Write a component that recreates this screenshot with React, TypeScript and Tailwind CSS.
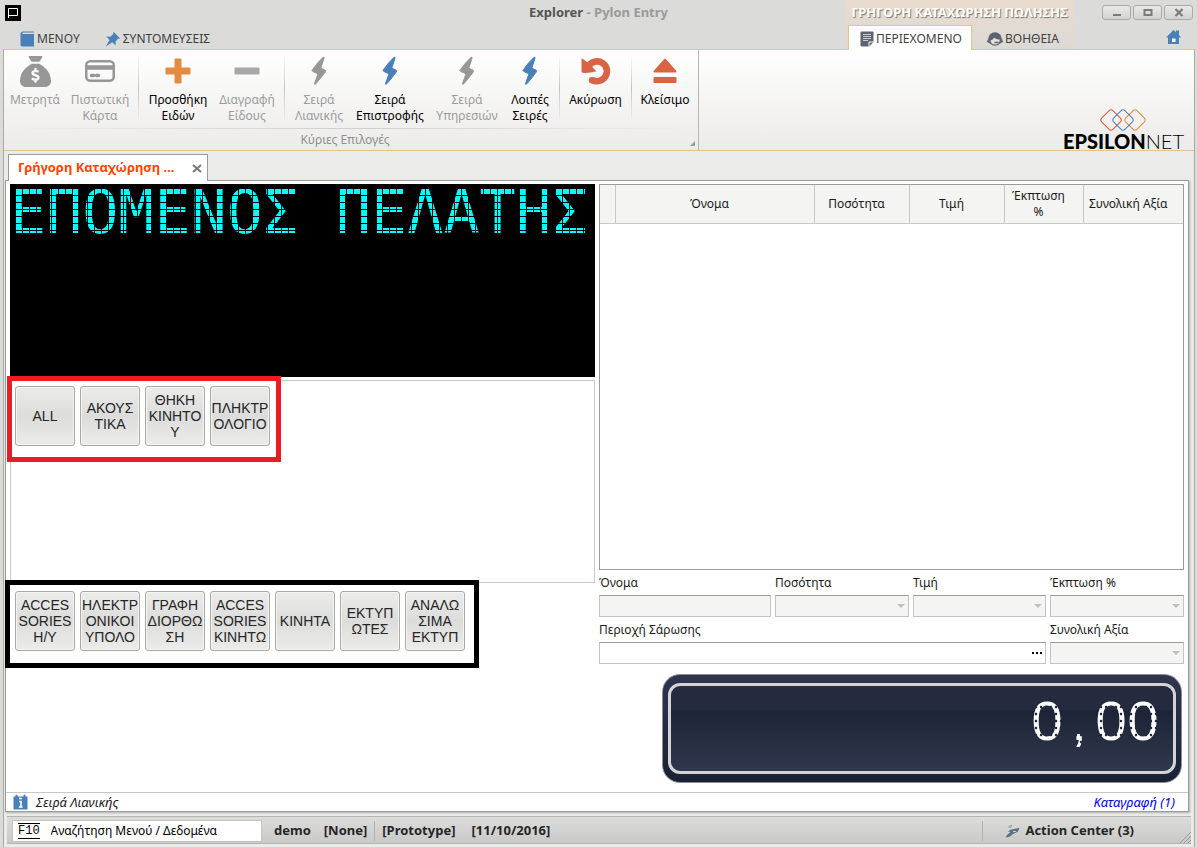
import { useState } from 'react'
import type { ReactNode } from 'react'
import { FaSackDollar } from 'react-icons/fa6'
import { clsx } from 'clsx'

// ── Icons ─────────────────────────────────────────────────────────────────────

function BoltIcon() {
  return (
    <svg width="16" height="30" viewBox="0 0 16 30" fill="currentColor" stroke="currentColor" strokeLinejoin="round">
      <path d="M12 1.300Q13.500.8 13 2.200L9.800 12.200l4.300 2q1 .6.300 1.600Q10 22 4.800 27.800 3.200 29 3.500 27.600L7 17.800 1.700 15.400Q.6 14.800 1.400 13.700 6 7 12 1.300z" />
    </svg>
  )
}

function CardIcon() {
  return (
    <svg width="30" height="24" viewBox="0 0 30 24" fill="none" stroke="currentColor">
      <rect x="1.250" y="2.250" width="27.500" height="19.500" rx="4" strokeWidth="2.500" />
      <path d="M1 8.500h28" strokeWidth="4.500" />
      <path d="M6.500 16.500h2M11.500 16.500h2" strokeWidth="3.500" strokeLinecap="round" />
    </svg>
  )
}

function PlusIcon() {
  return (
    <svg width="26" height="26" viewBox="0 0 26 26" fill="currentColor">
      <rect x="9.500" y="0.500" width="7" height="25" rx="1" />
      <rect x="0.500" y="9.500" width="25" height="7" rx="1" />
    </svg>
  )
}

function MinusIcon() {
  return (
    <svg width="26" height="26" viewBox="0 0 26 26" fill="currentColor">
      <rect x="0.500" y="9.500" width="25" height="7" rx="1" />
    </svg>
  )
}

function UndoIcon() {
  return (
    <svg width="30" height="28" viewBox="0 0 30 28">
      <path d="M8 8.500A9.900 9.900 0 1 1 11 22.800" fill="none" stroke="currentColor" strokeWidth="6.600" />
      <circle cx="11" cy="23.200" r="3.200" fill="currentColor" />
      <path d="M.5 2.200Q.5 1 1.600 1.700L6 5 15.500 14.200Q8 16.400 1.600 15.800.5 15.700.5 14.600z" fill="currentColor" />
    </svg>
  )
}

function EjectIcon() {
  return (
    <svg width="24" height="26" viewBox="0 0 24 26" fill="currentColor">
      <path d="M11 1.200c.6-.6 1.400-.6 2 0l10 11.300c.8.900.5 2-.7 2H1.700c-1.200 0-1.500-1.100-.7-2z" />
      <rect x="0.500" y="19" width="23" height="6" rx="1" />
    </svg>
  )
}

function BookIcon() {
  return (
    <svg width="15" height="16" viewBox="0 0 15 16" fill="#4a80b9">
      <path d="M3 .5h11v1H3.500C2 1.500 1.800 2.500 2.800 3H14v12.500H2.500C1.200 15.500.5 14.600.5 13.500V3C.5 1.500 1.500.5 3 .5z" />
    </svg>
  )
}

function PinIcon() {
  return (
    <svg width="16" height="16" viewBox="0 0 16 16" fill="#4a80b9">
      <path d="M8.500.8 15.200 7.500l-2.400.2-2.300 3 .2 3.800L7.200 11.200.8 15.400 4.600 9 1.300 5.600l4 .2L8.300 3z" />
    </svg>
  )
}

function NoteIcon() {
  return (
    <svg width="14" height="16" viewBox="0 0 14 16">
      <path d="M1.500.5h11q1 0 1 1V11l-4.200 4.500H1.500q-1 0-1-1v-13q0-1 1-1z" fill="#5d6470" />
      <path d="M3 3.500h8M3 5.500h8M3 7.500h8M3 9.500h5" stroke="#e8e8ea" strokeWidth=".8" />
      <path d="M9 15.500V11h4.500" fill="none" stroke="#fff" />
    </svg>
  )
}

function HelpIcon() {
  return (
    <svg width="16" height="16" viewBox="0 0 16 16">
      <circle cx="8" cy="8" r="6.800" fill="#5d6470" />
      <path d="M3.500 9.500C5 9 6.500 8 7.200 6.500 8.500 8 10.500 8.600 12.800 8.600c0 3-2 5-4.600 5s-4.500-1.700-4.700-4.100z" fill="#e6dfd6" />
      <path d="M7.500 11.500h4" fill="none" stroke="#5d6470" strokeWidth="1.500" />
      <path d="M1 7.500 0 11l3 1.500zM15 7.500l1 3.500-3 1.500z" fill="#5d6470" />
    </svg>
  )
}

function HomeIcon() {
  return (
    <svg width="15" height="14" viewBox="0 0 15 14" fill="#4a80b9">
      <path d="M7.500 0 10 2.300V.5h3v4.600l2 2.400h-2V14H2V7.500H0z" />
      <path d="M6 8.500h3.500V12H6z" fill="#fff" />
    </svg>
  )
}

function InfoIcon() {
  return (
    <svg width="15" height="16" viewBox="0 0 15 16">
      <path d="M.5 2.500h2V.8h2v1.700h6V.8h2v1.700h2v13H.5z" fill="#4a80b9" />
      <path d="M6 4.500h3M6 7.500h2V13M5.800 13h3.800" stroke="#fff" strokeWidth="1.600" fill="none" />
    </svg>
  )
}

function RocketIcon() {
  return (
    <svg width="16" height="14" viewBox="0 0 16 14">
      <path d="M1 12 5.500 8 3 7.500l3-2L14.500 4 13 7.500 8 10 5 12.500 1.500 13.500z" fill="#5c7088" />
      <path d="M2.500 3.500 5 1h2.500L6 4z" fill="#a3acb5" />
      <path d="M8 7.500h3" stroke="#c9ced3" />
    </svg>
  )
}

function DiamondsLogo() {
  const marks = [
    { x: 12, color: '#d9583c' },
    { x: 36, color: '#e58a3e' },
    { x: 24, color: '#4a80b9' },
  ]
  return (
    <svg width="49" height="24" viewBox="0 0 49 24" fill="none">
      {marks.map(m => (
        <rect
          key={m.x}
          x={m.x - 8}
          y="4"
          width="16"
          height="16"
          rx="3"
          stroke={m.color}
          transform={`rotate(45 ${m.x} 12)`}
        />
      ))}
    </svg>
  )
}

// ── Window header ─────────────────────────────────────────────────────────────

function WindowButton({ label, children }: { label: string; children: ReactNode }) {
  return (
    <button
      type="button"
      aria-label={label}
      className="flex h-[15px] w-[29px] items-center justify-center rounded-[3px] border border-[#a9a9a8] bg-gradient-to-b from-[#e9e9e8] to-[#d2d2d0]"
    >
      <svg width="10" height="9" viewBox="0 0 10 9" fill="none" stroke="#7b7b7b">
        {children}
      </svg>
    </button>
  )
}

function WindowHeader() {
  return (
    <header className="flex h-[49px] text-[#3f3f3f]">
      <div className="flex flex-1 flex-col">
        <div className="flex h-[26px] items-center pl-[5px]">
          <span className="flex size-4 items-center justify-center bg-black">
            <svg width="12" height="12" viewBox="0 0 12 12" fill="none" stroke="#fff">
              <path d="M1.500 11V1.500h9v7h-9" />
            </svg>
          </span>
          <h1 className="mr-[177px] ml-auto text-[13px] font-bold text-[#9a9a9a]">
            <span className="text-[#555]">Explorer</span> - Pylon Entry
          </h1>
        </div>
        <nav className="flex h-[23px] items-center gap-[25px] pt-[2px] pl-5 text-xs">
          <button type="button" className="flex items-center gap-[2px]">
            <BookIcon />ΜΕΝΟΥ
          </button>
          <button type="button" className="flex items-center gap-[2px]">
            <PinIcon />ΣΥΝΤΟΜΕΥΣΕΙΣ
          </button>
        </nav>
      </div>

      <div className="flex w-[229px] flex-col border-x border-[#e6d9c8] bg-gradient-to-b from-[#e9dccd] to-[#dcd9d5]">
        <div className="flex h-[25px] items-center justify-center text-[13px] font-bold whitespace-nowrap text-white [text-shadow:1px_1px_1px_#777]">
          ΓΡΗΓΟΡΗ ΚΑΤΑΧΩΡΗΣΗ ΠΩΛΗΣΗΣ
        </div>
        <div className="flex flex-1 text-xs" role="tablist">
          <button
            type="button"
            role="tab"
            aria-selected="true"
            className="relative z-10 -mb-px ml-[2px] flex w-[124px] items-center gap-[2px] border border-b-0 border-[#e3c48f] bg-white pt-px pl-[11px]"
          >
            <NoteIcon />ΠΕΡΙΕΧΟΜΕΝΟ
          </button>
          <button type="button" role="tab" aria-selected="false" className="ml-[15px] flex items-center gap-[2px] pt-[3px]">
            <HelpIcon />ΒΟΗΘΕΙΑ
          </button>
        </div>
      </div>

      <div className="flex w-[123px] flex-col items-end">
        <div className="flex h-6 items-center gap-[2px] pr-1">
          <WindowButton label="Minimize"><path d="M1 7h8" strokeWidth="2" /></WindowButton>
          <WindowButton label="Maximize"><path d="M1.500 2h7v5h-7z" strokeWidth="2" /></WindowButton>
          <WindowButton label="Close"><path d="m1.500 1 7 7m0-7-7 7" strokeWidth="2.200" /></WindowButton>
        </div>
        <button type="button" aria-label="Home" className="mt-[6px] mr-4">
          <HomeIcon />
        </button>
      </div>
    </header>
  )
}

// ── Ribbon ────────────────────────────────────────────────────────────────────

interface RibbonItem {
  label: string
  icon: ReactNode
  width: string
  color: string
  disabled?: boolean
}

const RIBBON_GROUPS: { id: string; pad: string; items: RibbonItem[] }[] = [
  {
    id: 'payment',
    pad: 'pr-1',
    items: [
      { label: 'Μετρητά', icon: <FaSackDollar size={31} />, width: 'w-[62px]', color: 'text-[#979797]', disabled: true },
      { label: 'Πιστωτική Κάρτα', icon: <CardIcon />, width: 'w-[68px]', color: 'text-[#979797]', disabled: true },
    ],
  },
  {
    id: 'lines',
    pad: 'pr-[7px]',
    items: [
      { label: 'Προσθήκη Ειδών', icon: <PlusIcon />, width: 'w-[78px]', color: 'text-[#e58a43]' },
      { label: 'Διαγραφή Είδους', icon: <MinusIcon />, width: 'w-[60px]', color: 'text-[#a8a8a8]', disabled: true },
    ],
  },
  {
    id: 'series',
    pad: 'pr-[6px]',
    items: [
      { label: 'Σειρά Λιανικής', icon: <BoltIcon />, width: 'w-[68px]', color: 'text-[#979797]', disabled: true },
      { label: 'Σειρά Επιστροφής', icon: <BoltIcon />, width: 'w-[74px]', color: 'text-[#4a80b9]' },
      { label: 'Σειρά Υπηρεσιών', icon: <BoltIcon />, width: 'w-[80px]', color: 'text-[#979797]', disabled: true },
      { label: 'Λοιπές Σειρές', icon: <BoltIcon />, width: 'w-[46px]', color: 'text-[#4a80b9]' },
    ],
  },
  {
    id: 'cancel',
    pad: 'pr-0',
    items: [{ label: 'Ακύρωση', icon: <UndoIcon />, width: 'w-[71px]', color: 'text-[#d96445]' }],
  },
  {
    id: 'close',
    pad: 'pr-0',
    items: [{ label: 'Κλείσιμο', icon: <EjectIcon />, width: 'w-[66px]', color: 'text-[#d96445]' }],
  },
]

function Ribbon() {
  return (
    <section className="flex border-y border-[#e3c48f] bg-gradient-to-b from-white to-[#ecebe9]">
      <div className="relative border-r border-[#b5b5b4]">
        <div className="flex">
          {RIBBON_GROUPS.map((g, i) => (
            <div key={g.id} className={clsx('flex', g.pad)}>
              {i > 0 && <span className="mt-1 h-[70px] w-px bg-gradient-to-b from-transparent via-[#c4c4c4] to-transparent" />}
              {g.items.map(item => (
                <button
                  key={item.label}
                  type="button"
                  disabled={item.disabled}
                  className={clsx('flex h-[78px] flex-col items-center pt-[5px] text-xs leading-4', item.width)}
                >
                  <span className={clsx('flex h-8 items-center', item.color)}>{item.icon}</span>
                  <span className={clsx('mt-[5px]', item.disabled ? 'text-[#9b9b9b]' : 'text-black')}>{item.label}</span>
                </button>
              ))}
            </div>
          ))}
        </div>
        <div className="mx-1 h-px bg-gradient-to-r from-transparent via-[#cfcfce] to-transparent" />
        <div className="flex h-[21px] items-center justify-center pr-3 text-xs text-[#8e8e8e]">Κύριες Επιλογές</div>
        <svg width="5" height="5" className="absolute right-[3px] bottom-1" fill="#9b9b9b">
          <path d="M5 0v5H0z" />
        </svg>
      </div>
      <div className="flex flex-1 flex-col items-end justify-end pr-[10px]">
        <div className="mr-9">
          <DiamondsLogo />
        </div>
        <div className="font-[Lato,sans-serif] text-[20px] leading-[18px] font-black text-black">
          EPSILON<span className="font-light">NET</span>
        </div>
      </div>
    </section>
  )
}

// ── Till ──────────────────────────────────────────────────────────────────────

const SUBCATEGORIES = ['ALL', 'ΑΚΟΥΣ\nΤΙΚΑ', 'ΘΗΚΗ\nΚΙΝΗΤΟ\nΥ', 'ΠΛΗΚΤΡ\nΟΛΟΓΙΟ']

const CATEGORIES = [
  'ACCES\nSORIES\nΗ/Υ',
  'ΗΛΕΚΤΡ\nΟΝΙΚΟΙ\nΥΠΟΛΟ',
  'ΓΡΑΦΗ\nΔΙΟΡΘΩ\nΣΗ',
  'ACCES\nSORIES\nΚΙΝΗΤΩ',
  'ΚΙΝΗΤΑ',
  'ΕΚΤΥΠ\nΩΤΕΣ',
  'ΑΝΑΛΩ\nΣΙΜΑ\nΕΚΤΥΠ',
]

function TileRow({ items }: { items: string[] }) {
  return (
    <div className="flex gap-[5px]">
      {items.map(name => (
        <button
          key={name}
          type="button"
          className="flex size-[60px] items-center justify-center rounded-[3px] border border-[#a9a9a8] bg-gradient-to-b from-[#ececeb] via-[#dcdcdb] to-[#ececeb] font-['Liberation_Sans',Arial,sans-serif] text-[14px] leading-4 whitespace-pre text-[#262626] shadow-[inset_0_0_0_1px_#f4f4f3]"
        >
          {name}
        </button>
      ))}
    </div>
  )
}

// Each character takes a 36px wide block of five 7px cells.
function CustomerDisplay() {
  return (
    <div className="relative h-[193px] bg-black font-['DejaVu_Sans_Mono',monospace] text-[60px] leading-[56px] whitespace-nowrap text-[#00ffff]">
      ΕΠΟΜΕΝΟΣ ΠΕΛΑΤΗΣ
      <div className="absolute inset-0 bg-[linear-gradient(90deg,transparent_6px,black_6px_7px,transparent_7px_13px,black_13px_14px,transparent_14px_20px,black_20px_21px,transparent_21px_27px,black_27px_28px,transparent_28px_35px,black_35px_36px)] bg-[length:36px_100%] bg-[position:6px_0]" />
      <div className="absolute inset-0 bg-[linear-gradient(transparent_6px,black_6px)] bg-[length:100%_7px] bg-[position:0_5px]" />
    </div>
  )
}

const COLUMNS = [
  { label: 'Όνομα', width: 'w-auto' },
  { label: 'Ποσότητα', width: 'w-[95px]' },
  { label: 'Τιμή', width: 'w-[95px]' },
  { label: 'Έκπτωση %', width: 'w-[79px]' },
  { label: 'Συνολική Αξία', width: 'w-[100px]' },
]

function LinesTable() {
  return (
    <div className="min-h-[386px] flex-1 border border-[#9b9b9b] bg-white">
      <table className="w-full table-fixed text-xs leading-4">
        <thead>
          <tr className="h-[38px] border-b border-[#c8c8c8] bg-[#f4f4f3]">
            <th className="w-[15px] border-r border-[#c8c8c8]" aria-label="Γραμμή" />
            {COLUMNS.map(c => (
              <th key={c.label} className={clsx('border-r border-[#c8c8c8] py-0 pr-[14px] pl-1 font-normal last:border-r-0', c.width)}>
                {c.label}
              </th>
            ))}
          </tr>
        </thead>
        <tbody />
      </table>
    </div>
  )
}

const fieldBorder = 'h-[22px] w-full border border-[#c4c4c4] border-t-[#9b9b9b]'

function ComboField({ id, label }: { id: string; label: string }) {
  return (
    <div>
      <label htmlFor={id} className="block h-[25px] leading-[25px]">{label}</label>
      <div className="relative">
        <select id={id} disabled className={clsx(fieldBorder, 'block appearance-none bg-[#f4f4f3]')} />
        <svg width="8" height="4" className="absolute top-[9px] right-1" fill="#c0c0c0">
          <path d="M0 0h8L4 4z" />
        </svg>
      </div>
    </div>
  )
}

function EntryForm() {
  const [scan, setScan] = useState('')
  return (
    <form className="grid grid-cols-[172fr_134fr_133fr_134fr] gap-x-1 text-xs" onSubmit={e => e.preventDefault()}>
      <div>
        <label htmlFor="name" className="block h-[25px] leading-[25px]">Όνομα</label>
        <input id="name" disabled className={clsx(fieldBorder, 'block bg-[#f4f4f3]')} />
      </div>
      <ComboField id="quantity" label="Ποσότητα" />
      <ComboField id="price" label="Τιμή" />
      <ComboField id="discount" label="Έκπτωση %" />
      <div className="col-span-3">
        <label htmlFor="scan" className="block h-[25px] leading-[25px]">Περιοχή Σάρωσης</label>
        <div className="relative">
          <input
            id="scan"
            value={scan}
            onChange={e => setScan(e.target.value)}
            className={clsx(fieldBorder, 'block bg-white px-1 outline-none')}
          />
          <button type="button" aria-label="Επιλογή" className="absolute top-[10px] right-1">
            <svg width="10" height="2" className="block">
              <path d="M0 0h2v2H0zM4 0h2v2H4zM8 0h2v2H8z" />
            </svg>
          </button>
        </div>
      </div>
      <ComboField id="total" label="Συνολική Αξία" />
    </form>
  )
}

function TotalDisplay({ value }: { value: string }) {
  return (
    <div className="mt-[10px] mr-[2px] ml-auto h-[109px] w-[520px] rounded-[18px] border border-[#8b8d97] bg-gradient-to-b from-[#30354f] to-[#1b2135] px-[5px] py-2">
      <div className="h-full rounded-[12px] border-[3px] border-[#d4d4d6] bg-[linear-gradient(#262b3f_0%,#242a3e_28%,#1d2437_29%,#2f384d_100%)] pr-[14px]">
        <div className="flex justify-end pt-[6px] font-['Liberation_Sans',Arial,sans-serif] text-[56px] leading-[58px] text-white [mask-image:radial-gradient(ellipse_3px_4px_at_center,black_80%,transparent_100%)] [mask-size:5px_7px]">
          {value.split('').map((ch, i) => (
            <span key={i} className="w-8 text-center">{ch}</span>
          ))}
        </div>
      </div>
    </div>
  )
}

function StatusBar() {
  return (
    <footer className="mx-[3px] mt-1 mb-[3px] flex h-7 items-center border-y border-[#b5b5b4] bg-gradient-to-b from-[#dcdcda] to-[#c9c9c7] pt-px text-[13px] font-bold text-[#262626]">
      <label className="ml-[5px] flex h-[22px] w-[250px] items-center border border-[#c4c4c4] bg-white pl-[5px] text-xs font-normal text-black">
        <span className="border-y border-black font-['Liberation_Mono',monospace] text-xs leading-[14px]">F10</span>
        <input className="ml-[11px] w-full min-w-0 outline-none" defaultValue="Αναζήτηση Μενού / Δεδομένα" />
      </label>
      <span className="ml-3">demo</span>
      <span className="ml-[13px]">[None]</span>
      <span className="mx-[7px] h-5 w-px bg-[#b0b0af]" />
      <span>[Prototype]</span>
      <span className="ml-4">[11/10/2016]</span>
      <span className="ml-auto h-5 w-px bg-[#b0b0af]" />
      <button type="button" className="mr-[46px] ml-[22px] flex items-center gap-1 font-bold">
        <RocketIcon />Action Center (3)
      </button>
      <svg width="11" height="11" className="self-end" stroke="#9b9b9b">
        <path d="M0 11 11 0M4 11l7-7M8 11l3-3" />
      </svg>
    </footer>
  )
}

// ── Page ──────────────────────────────────────────────────────────────────────

export default function App() {
  return (
    <div className="flex min-h-screen flex-col bg-[#dbdbd9] font-['Noto_Sans',sans-serif] text-[#1a1a1a]">
      <WindowHeader />
      <div className="mr-[2px] ml-[3px] flex flex-1 flex-col border-x border-[#a9a9a8] bg-[#ebebea]">
        <Ribbon />
        <div className="mt-[3px] flex pl-1" role="tablist">
          <div className="relative z-10 -mb-px flex h-[27px] w-[200px] items-center justify-between border border-b-0 border-[#9b9b9b] bg-white pr-[5px] pl-[9px]">
            <button type="button" role="tab" aria-selected="true" className="text-[13px] font-bold whitespace-nowrap text-[#ff4500]">
              Γρήγορη Καταχώρηση ...
            </button>
            <button type="button" aria-label="Κλείσιμο καρτέλας">
              <svg width="10" height="9" viewBox="0 0 10 9" stroke="#7b7b7b" strokeWidth="2.200">
                <path d="m1 1 8 7m0-7-8 7" />
              </svg>
            </button>
          </div>
        </div>

        <main className="mr-[5px] ml-px flex flex-1 flex-col border border-[#9b9b9b] bg-white shadow-[1px_1px_2px_#b0b0af]">
          <div className="flex flex-1 gap-1 px-1 pt-[3px]">
            <div className="flex flex-1 flex-col">
              <CustomerDisplay />
              <div className="relative mt-[3px] h-[203px] border border-[#c8c8c8] pt-[5px] pl-1">
                <TileRow items={SUBCATEGORIES} />
                <div className="pointer-events-none absolute -top-[5px] -left-[4px] h-[86px] w-[274px] border-[5px] border-[#ed1c24]" />
              </div>
              <div className="relative pt-2 pl-[5px]">
                <TileRow items={CATEGORIES} />
                <div className="pointer-events-none absolute -top-[3px] -left-[5px] h-[88px] w-[474px] border-[5px] border-black" />
              </div>
            </div>
            <div className="flex flex-1 flex-col pb-[9px]">
              <LinesTable />
              <EntryForm />
              <TotalDisplay value="0,00" />
            </div>
          </div>
          <div className="flex h-[19px] items-center border-t border-[#c8c8c8] pr-[13px] pl-[7px] text-[13px] leading-4 italic">
            <InfoIcon />
            <span className="ml-2">Σειρά Λιανικής</span>
            <a href="#log" className="ml-auto text-[#0000ff]">Καταγραφή (1)</a>
          </div>
        </main>
        <StatusBar />
      </div>
    </div>
  )
}
